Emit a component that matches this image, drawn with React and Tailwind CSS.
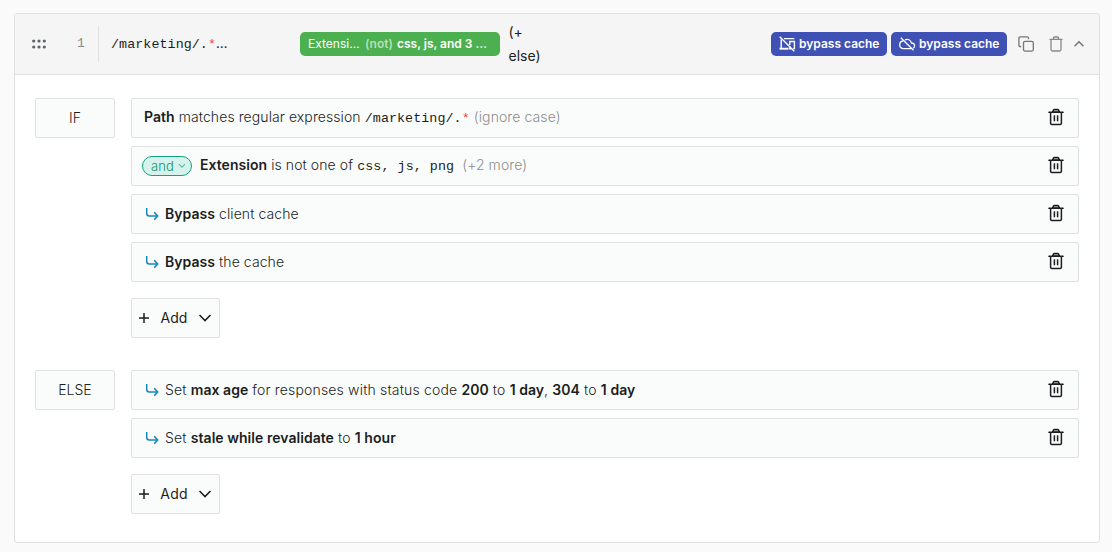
import React from "react";

const SANS = "font-['Inter','Liberation_Sans',sans-serif]";
const MONO = "font-['Liberation_Mono',monospace]";

function TrashIcon() {
  return (
    <svg width="16" height="18" viewBox="0 0 16 18" fill="none" stroke="#1c1e21" strokeWidth="1.5" className="shrink-0">
      <path d="M0.9 4.3H15.1" strokeLinecap="round" />
      <path d="M4.7 4L5.3 2.3Q5.6 1.6 6.4 1.6H9.6Q10.4 1.6 10.7 2.3L11.3 4Z" fill="#b4b5b6" />
      <path d="M2.6 4.5V15.2Q2.6 16.5 3.9 16.5H12.1Q13.4 16.5 13.4 15.2V4.5" />
      <path d="M6.4 7.3V13.3M9.6 7.3V13.3" />
    </svg>
  );
}

function ArrowIcon() {
  return (
    <svg width="15" height="14" viewBox="0 0 15 14" fill="none" stroke="#1587b8" strokeWidth="1.5" className="mr-[6px] shrink-0">
      <path d="M2.7 1V6.2Q2.7 9 5.5 9H13.5" />
      <path d="M10.2 5.4L13.8 9L10.2 12.6" />
    </svg>
  );
}

function Row({ action, children }) {
  return (
    <div className="flex h-10 items-center justify-between rounded-[2px] border border-[#dfe1e1] bg-[#fafcfb] pr-[14px] pl-3">
      <div className="flex items-center whitespace-pre">
        {action && <ArrowIcon />}
        {children}
      </div>
      <div className="pb-[2px]"><TrashIcon /></div>
    </div>
  );
}

function Label({ children }) {
  return (
    <div className="flex h-10 w-20 shrink-0 items-center justify-center rounded-[2px] border border-[#dfe1e1] bg-[#fafcfb]">
      {children}
    </div>
  );
}

function AddButton() {
  return (
    <button className="mt-2 flex h-10 w-[89px] items-center rounded-[2px] border border-[#dfe1e1] bg-[#fafcfb] pl-[6px] font-normal">
      <svg width="12" height="12" viewBox="0 0 12 12" fill="none" stroke="#1c1e21" strokeWidth="1.5">
        <path d="M1 6H11M6 1V11" />
      </svg>
      <span className="ml-[10px] w-[28px]">Add</span>
      <svg width="14" height="10" viewBox="0 0 14 10" fill="none" stroke="#1c1e21" strokeWidth="1.6" className="ml-[10px]">
        <path d="M1.5 2L7 7.5L12.5 2" />
      </svg>
    </button>
  );
}

function B({ children }) {
  return <span className="font-semibold tracking-[0.04px]">{children}</span>;
}

function Badge({ icon }) {
  return (
    <div className="flex h-6 w-[116px] items-center rounded-[5px] bg-[#3f51b5] pl-2 text-[12px] font-semibold text-white">
      {icon}
      <span className="ml-[3px] whitespace-nowrap">bypass cache</span>
    </div>
  );
}

const devicesOff = (
  <svg width="17" height="16" viewBox="0 0 17 16" fill="none" stroke="currentColor" strokeWidth="1.4">
    <path d="M0.7 0.8L15.3 15.3" />
    <path d="M5 2.6H15.3M2.2 3.5V12" />
    <path d="M0.5 12.7H9.5" strokeWidth="1.9" />
    <path d="M10.8 9V5.5H15.4V12.6H14.2" />
    <path d="M10.8 10.8V12.7H12.5" />
  </svg>
);

const cloudOff = (
  <svg width="17" height="16" viewBox="0 0 17 16" fill="none" stroke="currentColor" strokeWidth="1.3">
    <path d="M1.8 1.8L14.5 14.3" />
    <path d="M6 3.9C8.6 2.5 11.8 3.8 12.4 7C14.3 7.1 15.6 8.2 15.6 9.8C15.6 10.9 15 11.8 14.1 12.3" />
    <path d="M4.1 5C1.9 5.2 0.7 6.8 0.7 8.8C0.7 11 2.3 12.6 4.5 12.6H12.4" />
  </svg>
);

export default function App() {
  return (
    <div className={`h-[552px] w-[1112px] bg-[#fafafa] pt-[13px] pl-[14px] text-[14px] leading-6 font-light text-[#1c1e21] ${SANS}`}>
      <div className="h-[530px] w-[1086px] rounded-[3px] border border-[#dfe0e1] bg-white">
        <header className="flex h-[61px] items-center border-b border-[#dfe0e1] bg-[#f5f5f5]">
          <svg width="14" height="10" viewBox="0 0 14 10" fill="#5f646b" className="ml-[17px]">
            {[1.7, 7, 12.3].map((x) => [2, 8].map((y) => <circle key={`${x}-${y}`} cx={x} cy={y} r="1.6" />))}
          </svg>
          <span className={`ml-[31px] w-[21px] text-[13px] text-[#8a8a8a] ${MONO}`}>1</span>
          <div className="h-9 w-px bg-[#dfe0e1]" />
          <div className={`ml-[12px] w-[189px] text-[13.33px] font-normal tracking-[0.08px] ${MONO}`}>
            /marketing/.<span className="text-[#f44336]">*</span><span className={SANS}>…</span>
          </div>
          <div className="flex h-6 w-[200px] items-center rounded-[5px] bg-[#4caf50] pl-2 text-[12px] whitespace-nowrap text-white">
            <span className="w-[57px] font-normal">Extensi…</span>
            <span className="font-semibold"><span className="mr-px text-[#b7dfb9]">(not)</span> css, js, and 3 …</span>
          </div>
          <div className="ml-[8.5px] w-[40px] font-normal">(+ else)</div>
          <div className="ml-auto flex items-center gap-1">
            <Badge icon={devicesOff} />
            <Badge icon={cloudOff} />
          </div>
          <svg width="16" height="16" viewBox="0 0 16 16" fill="none" stroke="#777" strokeWidth="1.3" className="ml-[11px]">
            <rect x="5.5" y="5.3" width="9.8" height="9.8" rx="1.5" />
            <path d="M3.2 10.5H2.2Q0.9 10.5 0.9 9.2V2.2Q0.9 0.9 2.2 0.9H9.2Q10.5 0.9 10.5 2.2V3.2" />
          </svg>
          <svg width="14" height="16" viewBox="0 0 14 16" fill="none" stroke="#888" strokeWidth="1.3" className="ml-[15px]">
            <path d="M0.5 3.3H13.5M4.5 3V2Q4.5 1 5.5 1H8.5Q9.5 1 9.5 2V3M2 3.5V13.5Q2 15 3.5 15H10.5Q12 15 12 13.5V3.5" />
          </svg>
          <svg width="10" height="8" viewBox="0 0 10 8" fill="none" stroke="#6b7075" strokeWidth="1.4" className="mr-[15px] ml-[11px]">
            <path d="M0.6 6.2L5 1.7L9.4 6.2" />
          </svg>
        </header>

        <main className="flex flex-col gap-8 pt-[23px] pr-5 pl-5">
          <section className="flex gap-4">
            <Label>IF</Label>
            <div className="flex flex-1 flex-col gap-2 tracking-[0.09px]">
              <Row>
                <span className="-mt-px"><B>Path</B> matches regular expression <span className={`text-[13.33px] font-normal tracking-[0.08px] ${MONO}`}>/marketing/.<span className="text-[#f44336]">*</span></span> <span className="text-[#8c8c8c]">(ignore case)</span></span>
              </Row>
              <Row>
                <span className="-ml-[2px] flex h-5 w-[50px] items-center rounded-full border border-[#12a482] bg-[#d5f2eb] pl-2 text-[13px] text-[#12936f]">
                  and
                  <svg width="8" height="6" viewBox="0 0 8 6" fill="none" stroke="#5fbfa5" strokeWidth="1.2" className="ml-[4px]"><path d="M1 1.2L4 4.2L7 1.2" /></svg>
                </span>
                <span className="-mt-px ml-2"><B>Extension</B> is not one of <span className={`text-[13.33px] font-normal tracking-[0.08px] ${MONO}`}>css, js, png</span>{"  "}<span className="text-[#8c8c8c]">(+2 more)</span></span>
              </Row>
              <Row action><span><B>Bypass</B> client cache</span></Row>
              <Row action><span><B>Bypass</B> the cache</span></Row>
              <AddButton />
            </div>
          </section>
          <section className="flex gap-4">
            <Label>ELSE</Label>
            <div className="flex flex-1 flex-col gap-2 tracking-[0.17px]">
              <Row action><span>Set <B>max age</B> for responses with status code <B>200</B> to <B>1 day</B>, <B>304</B> to <B>1 day</B></span></Row>
              <Row action><span>Set <B>stale while revalidate</B> to <B>1 hour</B></span></Row>
              <AddButton />
            </div>
          </section>
        </main>
      </div>
    </div>
  );
}
